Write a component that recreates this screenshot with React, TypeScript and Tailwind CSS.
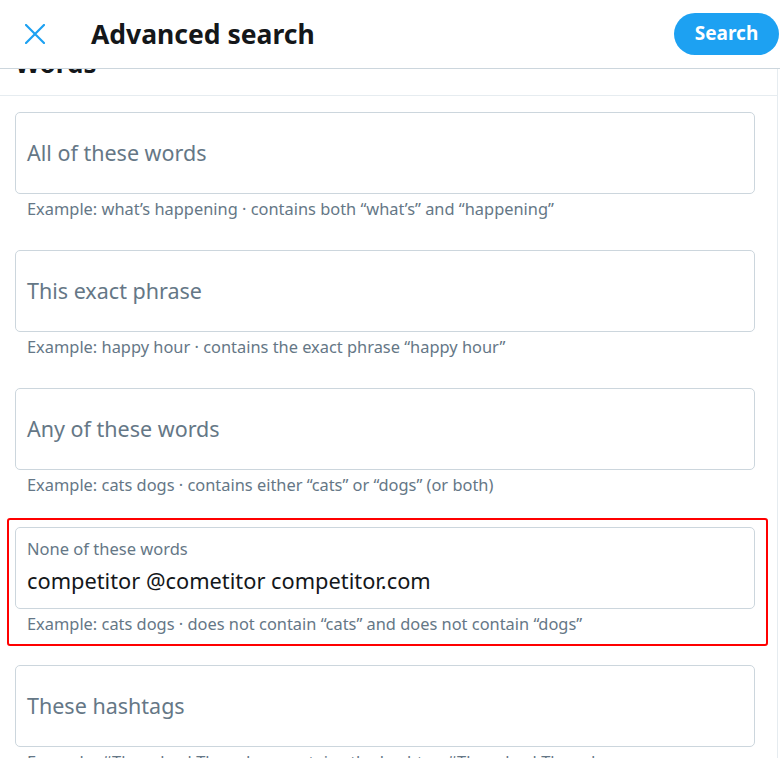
import React from "react";

const font = { fontFamily: '"Segoe UI", "Noto Sans", "Open Sans", sans-serif' };

function Field({
  placeholder,
  label,
  value,
  helper,
}: {
  placeholder?: string;
  label?: string;
  value?: string;
  helper: string;
}) {
  return (
    <div className="flex flex-col">
      <div className="h-[82px] border border-[#ccd6dd] rounded-[5px] px-[11px] flex flex-col justify-center">
        {label ? (
          <>
            <div className="text-[16.5px] leading-[20px] text-[#657786] mt-[-4px]">{label}</div>
            <div className="text-[21.8px] leading-[26px] text-[#14171a] mt-[9px]">{value}</div>
          </>
        ) : (
          <div className="text-[21.5px] leading-[26px] text-[#657786]">{placeholder}</div>
        )}
      </div>
      <div className="px-[12px] pt-[5px] text-[16.4px] leading-[20px] text-[#657786] whitespace-nowrap">{helper}</div>
    </div>
  );
}

export default function App() {
  return (
    <div className="w-[780px] h-[758px] overflow-hidden bg-white flex flex-col" style={font}>
      <header className="h-[69px] shrink-0 border-b border-[#ccd6dd] flex items-center">
        <div className="w-[68px] flex items-center justify-center">
          <svg width="20" height="20" viewBox="0 0 20 20" className="ml-[1px]">
            <path d="M1 1 L19 19 M19 1 L1 19" stroke="#1da1f2" strokeWidth="2.2" strokeLinecap="square" fill="none" />
          </svg>
        </div>
        <h1 className="ml-[23px] text-[26.5px] font-bold text-[#14171a] leading-none mt-[1px]">Advanced search</h1>
        <div className="flex-1" />
        <button className="h-[42px] w-[105px] rounded-l-full rounded-r-full bg-[#1da1f2] text-white font-bold text-[19px] mr-[1px] mb-[1px]">
          Search
        </button>
      </header>
      <div className="flex-1 w-[778px] border-r border-[#e6ecf0] overflow-hidden">
        <div className="h-[27px] overflow-hidden border-b border-[#e6ecf0]">
          <div className="text-[26px] font-bold text-[#14171a] leading-[30px] mt-[-21px] pl-[15px]">Words</div>
        </div>
        <div className="pl-[15px] pr-[22px] pt-[16px] flex flex-col gap-[31px]">
          <Field placeholder="All of these words" helper="Example: what’s happening · contains both “what’s” and “happening”" />
          <Field placeholder="This exact phrase" helper="Example: happy hour · contains the exact phrase “happy hour”" />
          <Field placeholder="Any of these words" helper="Example: cats dogs · contains either “cats” or “dogs” (or both)" />
          <div className="relative mt-[1px]">
            <div className="absolute left-[-8px] right-[-13px] top-[-9px] bottom-[-12px] border-2 border-[#ff0000] rounded-[3px] pointer-events-none" />
            <Field
              label="None of these words"
              value="competitor @cometitor competitor.com"
              helper="Example: cats dogs · does not contain “cats” and does not contain “dogs”"
            />
          </div>
          <Field placeholder="These hashtags" helper="Example: #ThrowbackThursday · contains the hashtag #ThrowbackThursday" />
        </div>
      </div>
    </div>
  );
}
